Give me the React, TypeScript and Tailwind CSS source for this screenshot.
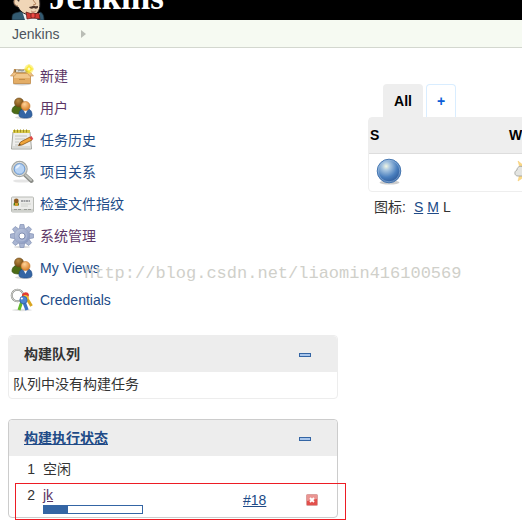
import React, { useState } from 'react';

const PackageIcon = () => (
  <svg width="24" height="24" viewBox="0 0 24 24" aria-hidden="true">
    <ellipse cx="12" cy="20" rx="9" ry="1.500" fill="#000" opacity=".18" />
    <path d="M4 5h14l3 5H3z" fill="#b98a4e" />
    <path d="M5 6h13l1 3H5z" fill="#8a7148" />
    <path d="M6 5.500h9l1 3H6z" fill="#d8d8d2" />
    <path d="M8 7l2-1 2 1 2-1" stroke="#888a85" fill="none" />
    <path d="M3.500 9h17v10.500h-17z" fill="#e3ad66" stroke="#c08a48" strokeWidth=".8" />
    <path d="M4 10h16v4H4z" fill="#f0c78c" />
    <path d="M3.500 8.500L.5 12h4L7 8.500zM20.500 8.500l3 3.500h-4L17 8.500z" fill="#efc184" stroke="#c9975a" strokeWidth=".7" />
    <path d="M9 15.500h6" stroke="#c18c48" />
    <circle cx="19" cy="5" r="4.500" fill="#fce94f" opacity=".6" />
    <path d="M19 .5v9M14.500 5h9" stroke="#f7e43a" />
    <circle cx="19" cy="5" r="2.700" fill="#fbe92f" />
    <circle cx="19" cy="5" r="1.400" fill="#fffbc0" />
  </svg>
);

const UsersIcon = () => (
  <svg width="24" height="24" viewBox="0 0 24 24" aria-hidden="true">
    <defs>
      <radialGradient id="headBack" cx=".4" cy=".3" r=".7">
        <stop offset="0" stopColor="#b98a45" />
        <stop offset="1" stopColor="#744a12" />
      </radialGradient>
      <radialGradient id="headFront" cx=".4" cy=".3" r=".7">
        <stop offset="0" stopColor="#ffd49a" />
        <stop offset="1" stopColor="#d9802a" />
      </radialGradient>
    </defs>
    <ellipse cx="14" cy="21.500" rx="9" ry="1.500" fill="#000" opacity=".15" />
    <path d="M2 15c0-4 3-6 7-6s6 2 6 6c0 2-2 3-6 3s-7-1-7-3z" fill="#4b6b16" stroke="#35500b" strokeWidth=".7" />
    <circle cx="9" cy="6.500" r="4.500" fill="url(#headBack)" stroke="#6f4b1c" strokeWidth=".6" />
    <path d="M9 19c0-5 3-6.500 6.500-6.500S22 14 22 19c0 2-2 3-6.500 3S9 21 9 19z" fill="#3465a4" stroke="#204a87" strokeWidth=".7" />
    <path d="M13 13l2.500 5 2.500-5z" fill="#f3f6fa" />
    <circle cx="15.500" cy="10" r="4.500" fill="url(#headFront)" stroke="#c5752a" strokeWidth=".6" />
  </svg>
);

const NotepadIcon = () => (
  <svg width="24" height="24" viewBox="0 0 24 24" aria-hidden="true">
    <path d="M3 4h17l1.500 17h-20z" fill="#eeeeec" stroke="#a4a6a0" />
    <path d="M2.500 19h18" stroke="#c4c6c1" />
    <path d="M3 2h17v3H3z" fill="#d6c748" />
    <path d="M4.500 1.500v3M7.500 1.500v3M10.500 1.500v3M13.500 1.500v3M16.500 1.500v3" stroke="#a09020" />
    <path d="M5 8h12M5 11h10M5 14h4M5 17h3" stroke="#c2c4bf" />
    <path d="M8.500 17.500l2-3.500L20 9l2 3-10 5z" fill="#f0a43a" stroke="#8a5310" strokeWidth=".8" />
    <path d="M19.500 9.200l2-1.200 1.800 3-1.800 1.200z" fill="#e04848" />
    <path d="M8.500 17.500l1.200-2 1 1.600z" fill="#333" />
  </svg>
);

const SearchIcon = () => (
  <svg width="24" height="24" viewBox="0 0 24 24" aria-hidden="true">
    <ellipse cx="12" cy="21" rx="9" ry="1.600" fill="#000" opacity=".1" />
    <path d="M14 14l7.500 7" stroke="#8c8e89" strokeWidth="4" strokeLinecap="round" />
    <path d="M14.500 14l6.500 6" stroke="#c3c5c0" strokeWidth="2" strokeLinecap="round" />
    <circle cx="9.500" cy="9" r="7" fill="#b7d3f4" stroke="#a4a6a2" strokeWidth="2.500" />
    <circle cx="9.500" cy="9" r="6.600" fill="none" stroke="#e6e7e4" />
    <circle cx="9.500" cy="9" r="5.300" fill="none" stroke="#6f9bd2" />
    <path d="M5.500 9c0-3 2-4.500 5-4.500-1 2-2 3.500-5 4.500z" fill="#e8f2fe" />
  </svg>
);

const IdCardIcon = () => (
  <svg width="24" height="24" viewBox="0 0 24 24" aria-hidden="true">
    <rect x="1.500" y="5" width="22" height="15" rx="1" fill="#ebebe9" stroke="#b9bbb6" />
    <path d="M2 17h21v2.500H2z" fill="#cfd1cc" />
    <path d="M4 17.500h8M14 17.500h7" stroke="#9a9c97" strokeDasharray="3 1" />
    <path d="M3.500 13.500c0-3 1-4 2.800-4S9 10.500 9 13.500z" fill="#4e7c14" />
    <circle cx="6.300" cy="9" r="2.400" fill="#8f5a1e" />
    <path d="M5 14h3v-3H5z" fill="#d49a2d" />
    <path d="M11 9h9" stroke="#85878a" strokeWidth="1.500" strokeDasharray="2 .5" />
    <path d="M11 12h10M11 14h7" stroke="#d0d2cd" />
  </svg>
);

const GearIcon = () => (
  <svg width="24" height="24" viewBox="0 0 24 24" aria-hidden="true">
    <defs>
      <linearGradient id="gearFill" x1="0" y1="0" x2="1" y2="1">
        <stop offset="0" stopColor="#c2cce0" />
        <stop offset="1" stopColor="#8393bd" />
      </linearGradient>
    </defs>
    <ellipse cx="12" cy="23" rx="8" ry="1" fill="#000" opacity=".15" />
    {[0, 45, 90, 135, 180, 225, 270, 315].map((angle) => (
      <path
        key={angle}
        d="M9.300 5l.8-4.500h3.800l.8 4.500z"
        transform={`rotate(${angle} 12 12)`}
        fill="#a9b5d2"
        stroke="#8290b4"
        strokeWidth=".7"
      />
    ))}
    <circle cx="12" cy="12" r="7.700" fill="url(#gearFill)" stroke="#8e9bbd" strokeWidth=".5" />
    <circle cx="12" cy="12" r="4.500" fill="none" stroke="#aab6d4" strokeWidth="1.500" />
    <circle cx="12" cy="12" r="3" fill="#fff" stroke="#6f7da5" strokeWidth=".8" />
  </svg>
);

const KeysIcon = () => (
  <svg width="24" height="24" viewBox="0 0 24 24" aria-hidden="true">
    <ellipse cx="12" cy="22" rx="10" ry="1.200" fill="#000" opacity=".12" />
    <circle cx="7.500" cy="7.500" r="5.800" fill="none" stroke="#888a85" strokeWidth="2" />
    <circle cx="7.500" cy="7.500" r="5.800" fill="none" stroke="#dcddda" />
    <path d="M16 9l5.500 9" stroke="#d9a520" strokeWidth="3" />
    <path d="M12 7c1-3 6-4 7 0l-1 3-6 1z" fill="#e23c32" />
    <path d="M13 8c2-2 5-1 6 2l-2 3-4-1z" fill="#f2c230" />
    <path d="M12 13l-3 9" stroke="#63b82a" strokeWidth="3" />
    <path d="M10.500 11c1-2 5-2 5.500 0l-2 4-3-1z" fill="#5cab28" />
    <path d="M14 14l3 8" stroke="#3b73c4" strokeWidth="3.500" />
    <circle cx="13.500" cy="12" r="3.700" fill="#4c85d2" stroke="#2c5a9e" strokeWidth=".7" />
    <circle cx="11.800" cy="10.500" r="1.100" fill="#fff" />
  </svg>
);

const BallIcon = () => (
  <svg width="28" height="28" viewBox="0 0 28 28" role="img" aria-label="Success">
    <defs>
      <radialGradient id="ballFill" cx=".38" cy=".3" r=".72">
        <stop offset="0" stopColor="#f1f6e4" />
        <stop offset=".25" stopColor="#a5c3df" />
        <stop offset=".65" stopColor="#4a7fbe" />
        <stop offset="1" stopColor="#2c5897" />
      </radialGradient>
    </defs>
    <ellipse cx="13.500" cy="24.500" rx="10" ry="2" fill="#000" opacity=".2" />
    <circle cx="13" cy="13" r="11.800" fill="url(#ballFill)" stroke="#4576b0" />
    <circle cx="13" cy="13" r="10.800" fill="none" stroke="#9fbfe0" strokeWidth=".8" opacity=".7" />
  </svg>
);

const WeatherIcon = () => (
  <svg width="28" height="28" viewBox="0 0 28 28" role="img" aria-label="Weather">
    <path
      d="M4 3l6 5 3-8 4 7 7-4-2 7 6 3-6 3 2 7-7-3-4 7-3-8-6 4 2-8-3-2 3-3z"
      fill="#fbd988"
      stroke="#f5c96a"
      strokeWidth=".5"
    />
    <circle cx="13" cy="12" r="6.500" fill="#fdebb0" stroke="#f3bb55" />
    <path d="M4 18c-4 0-4-5-1-6 0-4 5-5 7-2 5 0 5 8 0 8z" fill="#e4e5e2" stroke="#a3a5a0" strokeWidth=".9" />
  </svg>
);

const StopIcon = () => (
  <svg width="12" height="12" viewBox="0 0 12 12" aria-hidden="true">
    <rect x=".5" y=".5" width="11" height="11" rx="1" fill="#e2504c" stroke="#dba09e" />
    <path d="M1 1h10v4L1 7z" fill="#eb9592" />
    <path d="M4 4l4 4M8 4L4 8" stroke="#fff" strokeWidth="1.800" />
  </svg>
);

const CollapseIcon = () => (
  <svg width="12" height="4" viewBox="0 0 12 4" aria-hidden="true">
    <rect x=".5" y=".5" width="11" height="3" fill="#a9c6ec" stroke="#3465a4" />
  </svg>
);

const ButlerLogo = () => (
  <svg width="34" height="44" viewBox="0 -24 34 44" className="shrink-0" aria-hidden="true">
    <path d="M1 20c0-4 0-6 3-7l8-2 15 3 2-2c3 1 4 4 4 8z" fill="#335a70" stroke="#1c2f3b" strokeWidth=".7" />
    <path d="M11 11l3 9h12l3-7-9 1z" fill="#eef1f4" />
    <path d="M3-12C5-24 25-25 28-10l1 14c0 7-3 11-8 11-6 0-11-2-14-8C2 6 1 0 4-2z" fill="#f0d6b7" stroke="#231f20" />
    <path d="M3-2C0-22 24-26 28-9c-9-3-15-2-18 4L8 2 5-1z" fill="#453b36" />
    <path d="M4 0c-2 2 0 6 3 6" fill="none" stroke="#a87e5d" />
    <circle cx="17" cy="-3" r="1.500" fill="#222" />
    <circle cx="25" cy="-3" r="1.500" fill="#222" />
    <path d="M22 0l3 4-3 1" fill="none" stroke="#b88761" />
    <path d="M18 7c2 0 4-2 6-1s3-1 3 1-3 2-4 1c-2 1-4 1-5-1z" fill="#4b342a" />
    <path d="M20 11c2 1 3 1 5 0" stroke="#c98f74" fill="none" />
    <path d="M15 12l6 2 7-1 1 6-7-1-6 1z" fill="#d33833" stroke="#5c1513" strokeWidth=".7" />
    <rect x="20" y="13" width="4" height="5" rx="1" fill="#ef4a45" stroke="#5c1513" strokeWidth=".7" />
  </svg>
);

const tasks = [
  { name: '新建', icon: PackageIcon, visited: true },
  { name: '用户', icon: UsersIcon, visited: true },
  { name: '任务历史', icon: NotepadIcon, visited: false },
  { name: '项目关系', icon: SearchIcon, visited: false },
  { name: '检查文件指纹', icon: IdCardIcon, visited: false },
  { name: '系统管理', icon: GearIcon, visited: true },
  { name: 'My Views', icon: UsersIcon, visited: false },
  { name: 'Credentials', icon: KeysIcon, visited: false },
];

interface PaneProps {
  title: React.ReactNode;
  className: string;
  children: React.ReactNode;
}

const Pane: React.FC<PaneProps> = ({ title, className, children }) => {
  const [open, setOpen] = useState(true);

  return (
    <section className={`relative rounded border ${className}`}>
      <header className="flex h-9 items-center justify-between rounded-t bg-[#ededed] pr-[26px] pl-[15px]">
        <h2 className="font-bold">{title}</h2>
        <button onClick={() => setOpen(!open)} aria-label="Toggle" className="block pt-0.5">
          <CollapseIcon />
        </button>
      </header>
      {open && children}
    </section>
  );
};

const App: React.FC = () => {
  const progress = 24;

  return (
    <div className="overflow-hidden bg-white pb-2 font-['Liberation_Sans','Noto_Sans_CJK_SC',sans-serif] text-sm text-[#333]">
      <header className="flex h-5 items-end overflow-hidden bg-black pl-[11px]">
        <ButlerLogo />
        <span className="pb-1.5 pl-1 font-['Liberation_Serif',serif] text-[35px] leading-8 font-bold text-white">
          Jenkins
        </span>
      </header>

      <nav className="flex h-7 items-center gap-[22px] border-b border-[#d3d7cf] bg-[#f6faf2] px-3">
        <a href="#" className="text-[#4d545d]">Jenkins</a>
        <svg width="5" height="8" viewBox="0 0 5 8" aria-hidden="true">
          <path d="M0 0l5 4-5 4z" fill="#babdb6" />
        </svg>
      </nav>

      <div className="flex gap-[30px] pt-3 pl-2">
        <aside className="w-[330px] shrink-0">
          <div className="relative">
            <ul>
              {tasks.map(({ name, icon: Icon, visited }) => (
                <li key={name}>
                  <a
                    href="#"
                    className={`flex h-8 items-center gap-1.5 pl-0.5 ${visited ? 'text-[#5c3566]' : 'text-[#204a87]'}`}
                  >
                    <Icon />
                    {name}
                  </a>
                </li>
              ))}
            </ul>
            <span className="pointer-events-none absolute bottom-[30px] left-[76px] font-['Liberation_Mono',monospace] text-[17px] leading-6 whitespace-nowrap text-[#d0d0ca]">
              http://blog.csdn.net/liaomin416100569
            </span>
          </div>

          <div className="flex flex-col gap-5 pt-[19px]">
            <Pane title="构建队列" className="border-[#ededed]">
              <p className="px-1 pt-0.5 pb-1 leading-5">队列中没有构建任务</p>
            </Pane>

            <Pane
              title={<a href="#" className="text-[#204a87] underline">构建执行状态</a>}
              className="border-[#ccc]"
            >
              <table className="w-full table-fixed">
                <colgroup>
                  <col className="w-[34px]" />
                  <col />
                  <col className="w-[63px]" />
                  <col className="w-[31px]" />
                </colgroup>
                <tbody>
                  <tr className="h-[26px]">
                    <td className="pr-2 text-right">1</td>
                    <td colSpan={3}>空闲</td>
                  </tr>
                  <tr>
                    <td className="pt-[3px] pr-2 text-right align-top">2</td>
                    <td className="pt-[3px] pb-[3px]">
                      <a href="#" className="block text-[#5c3566] underline">jk</a>
                      <div className="h-[9px] w-[100px] border border-[#3465a4] bg-white">
                        <div className="h-full bg-[#3465a4]" style={{ width: `${progress}%` }} />
                      </div>
                    </td>
                    <td>
                      <a href="#" className="text-[#204a87] underline">#18</a>
                    </td>
                    <td>
                      <button className="block" aria-label="Stop">
                        <StopIcon />
                      </button>
                    </td>
                  </tr>
                </tbody>
              </table>
              <div className="pointer-events-none absolute top-[63px] -right-[9px] -bottom-[3px] left-1.5 border border-[#ed1c24]" />
            </Pane>
          </div>
        </aside>

        <main className="min-w-0 flex-1 overflow-hidden pt-6">
          <div className="flex gap-[3px] pl-[15px] font-bold">
            <a href="#" className="flex h-[33px] w-10 items-center justify-center rounded-t bg-[#eee] text-black">
              All
            </a>
            <a
              href="#"
              className="flex h-[33px] w-[30px] items-center justify-center rounded-t border border-b-0 border-[#d9edff] text-[#0b5ed7]"
            >
              +
            </a>
          </div>

          <div className="w-[480px] rounded border border-[#eee]">
            <table className="w-full table-fixed">
              <thead>
                <tr className="h-[35px] border-b border-[#ddd] bg-[#eee] text-left text-black">
                  <th className="w-[138px] pl-px">S</th>
                  <th className="pl-0.5">W</th>
                </tr>
              </thead>
              <tbody>
                <tr className="h-[38px]">
                  <td className="pl-[7px]">
                    <BallIcon />
                  </td>
                  <td className="pl-[7px]">
                    <WeatherIcon />
                  </td>
                </tr>
              </tbody>
            </table>
          </div>

          <div className="flex gap-1 pt-[5px] pl-1.5">
            <span className="pr-1">图标:</span>
            <a href="#" className="text-[#204a87] underline">S</a>
            <a href="#" className="text-[#204a87] underline">M</a>
            <span>L</span>
          </div>
        </main>
      </div>
    </div>
  );
};

export default App;
